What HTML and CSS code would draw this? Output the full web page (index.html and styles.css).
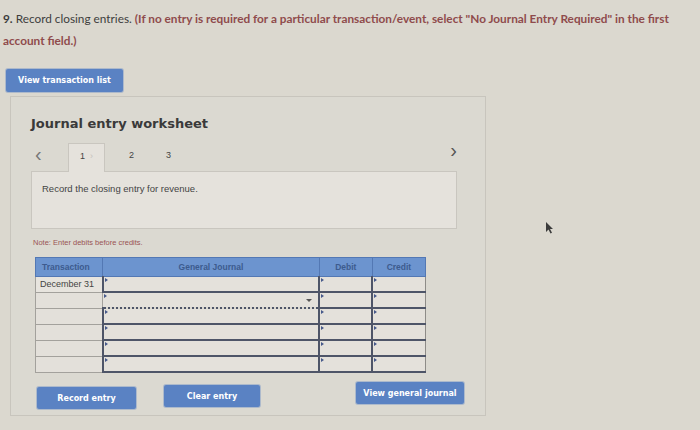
FILE: index.html
```html
<!DOCTYPE html>
<html lang="en">
<head>
    <meta charset="UTF-8">
    <meta name="viewport" content="width=device-width, initial-scale=1.0">
    <title>Journal entry worksheet</title>
    <link rel="stylesheet" href="styles.css">
</head>
<body>

<div class="page">
    <p class="question"><b>9.</b> Record closing entries. <span class="hint">(If no entry is required for a particular transaction/event, select "No Journal Entry Required" in the first account field.)</span></p>

    <button class="btn btn-list">View transaction list</button>

    <div class="worksheet">
        <h2>Journal entry worksheet</h2>

        <div class="tabs">
            <span class="arrow">&lsaquo;</span>
            <span class="tab active">1<i class="tick">&#8250;</i></span>
            <span class="tab">2</span>
            <span class="tab">3</span>
            <span class="arrow arrow-next">&rsaquo;</span>
        </div>

        <div class="prompt">Record the closing entry for revenue.</div>

        <p class="note">Note: Enter debits before credits.</p>

        <table class="journal">
            <thead>
                <tr>
                    <th class="col-date">Transaction</th>
                    <th class="col-account">General Journal</th>
                    <th class="col-amount">Debit</th>
                    <th class="col-amount">Credit</th>
                </tr>
            </thead>
            <tbody>
                <tr>
                    <td class="date filled">December 31</td>
                    <td class="field"></td>
                    <td class="field"></td>
                    <td class="field"></td>
                </tr>
                <tr>
                    <td class="date"></td>
                    <td class="field focused"><span class="caret"></span></td>
                    <td class="field"></td>
                    <td class="field"></td>
                </tr>
                <tr>
                    <td class="date"></td>
                    <td class="field"></td>
                    <td class="field"></td>
                    <td class="field"></td>
                </tr>
                <tr>
                    <td class="date"></td>
                    <td class="field"></td>
                    <td class="field"></td>
                    <td class="field"></td>
                </tr>
                <tr>
                    <td class="date"></td>
                    <td class="field"></td>
                    <td class="field"></td>
                    <td class="field"></td>
                </tr>
                <tr>
                    <td class="date"></td>
                    <td class="field"></td>
                    <td class="field"></td>
                    <td class="field"></td>
                </tr>
            </tbody>
        </table>

        <div class="actions">
            <button class="btn btn-record">Record entry</button>
            <button class="btn btn-clear">Clear entry</button>
            <button class="btn btn-journal">View general journal</button>
        </div>
    </div>
</div>

<svg class="pointer" width="9" height="13" viewBox="0 0 9 13">
    <path d="M1 1 L1 11 L3.5 8.5 L5.5 12.5 L7 11.8 L5 8 L8 8 Z" fill="#3b3b3b"/>
</svg>

</body>
</html>
```

FILE: styles.css
```css
body {
    margin: 0;
    background-color: #dbd8cf;
    font-family: Lato, "Open Sans", sans-serif;
    color: #3d3d3d;
    position: relative;
    height: 430px;
    overflow: hidden;
}
.page {
    padding: 8px 0 0 3px;
}
.question {
    margin: 0;
    font-size: 11.8px;
    line-height: 22px;
    width: 675px;
}
.question b {
    font-weight: 700;
}
.hint {
    color: #8f4b4c;
    font-weight: 700;
}
.btn {
    background-color: #5a82c3;
    color: white;
    border: none;
    border-radius: 2px;
    font-family: "DejaVu Sans", Verdana, sans-serif;
    font-weight: 700;
    font-size: 8px;
    box-shadow: 0 0 0 1px rgba(90, 130, 195, 0.35);
}
.btn-list {
    display: block;
    margin: 17px 0 0 3px;
    width: 117px;
    height: 23px;
}
.worksheet {
    margin: 4px 0 0 7px;
    width: 476px;
    height: 320px;
    box-sizing: border-box;
    border: 1px solid #c8c5bd;
    background-color: #dbd9d1;
    padding: 19px 0 0 20px;
}
h2 {
    margin: 0;
    font-family: "DejaVu Sans", Verdana, sans-serif;
    font-size: 13px;
    font-weight: 700;
    color: #3a3a3a;
}
.tabs {
    display: flex;
    align-items: center;
    margin-top: 11px;
    height: 29px;
    width: 426px;
    font-family: "Liberation Sans", Arial, sans-serif;
    font-size: 9px;
    color: #444;
}
.arrow {
    font-size: 20px;
    color: #777;
    width: 33px;
    padding-left: 4px;
    line-height: 1;
    margin-top: -6px;
}
.arrow-next {
    margin-left: auto;
    margin-top: -13px;
    color: #555;
    width: auto;
}
.tab {
    width: 37px;
    height: 29px;
    box-sizing: border-box;
    display: flex;
    align-items: center;
    justify-content: center;
    padding-bottom: 4px;
}
.tab.active {
    background-color: #e5e2dc;
    border: 1px solid #c9c6bf;
    border-bottom: none;
    position: relative;
    top: 1px;
    margin-right: 8px;
}
.tick {
    font-style: normal;
    color: #c4c1bb;
    margin-left: 5px;
}
.prompt {
    width: 426px;
    height: 58px;
    box-sizing: border-box;
    background-color: #e5e2dc;
    border: 1px solid #c9c6bf;
    font-family: "Liberation Sans", Arial, sans-serif;
    font-size: 9.5px;
    color: #444;
    padding: 11px 0 0 10px;
}
.note {
    margin: 9px 0 0 2px;
    font-family: "Liberation Sans", Arial, sans-serif;
    font-size: 7.5px;
    color: #9a5454;
}
.journal {
    margin: 10px 0 0 4px;
    width: 391px;
    border-collapse: collapse;
    font-family: "Liberation Sans", Arial, sans-serif;
    font-size: 8.5px;
}
.journal th {
    background-color: #6c94cf;
    color: #3d5b8e;
    font-weight: 700;
    height: 18px;
    padding: 0;
    border: 1px solid #5378b4;
}
.col-date {
    width: 60px;
    text-align: left;
    padding-left: 6px !important;
}
.col-account {
    width: 215px;
}
.col-amount {
    width: 52px;
}
.journal td {
    height: 14px;
    padding: 0;
    position: relative;
}
.date {
    border: 1px solid #a3a19c;
    background-color: #e3e0da;
    color: #444;
    padding-left: 4px !important;
    font-size: 9px;
}
.date.filled {
    background-color: #e7e4de;
}
.field {
    background-color: #e4e1db;
    border-left: 2px solid #4e5568;
    border-bottom: 2px solid #4e5568;
    border-right: 1px solid #8e8c88;
}
.field::before {
    content: "";
    position: absolute;
    left: 1px;
    top: 1px;
    border-left: 3px solid #46598a;
    border-top: 2px solid transparent;
    border-bottom: 2px solid transparent;
}
.field.focused {
    border: 1px dashed #5d6270;
    border-bottom: 2px dotted #4e5568;
}
.caret {
    position: absolute;
    right: 6px;
    top: 6px;
    border-top: 3px solid #555;
    border-left: 3px solid transparent;
    border-right: 3px solid transparent;
}
.actions {
    display: flex;
    align-items: flex-start;
    margin-top: 11px;
    padding-left: 6px;
}
.actions .btn {
    height: 22px;
}
.btn-record {
    width: 99px;
    margin-top: 3px;
}
.btn-clear {
    width: 96px;
    margin-left: 28px;
    margin-top: 1px;
}
.btn-journal {
    width: 108px;
    margin-left: 96px;
    margin-top: -2px;
}
.pointer {
    position: absolute;
    left: 545px;
    top: 221px;
}
```
